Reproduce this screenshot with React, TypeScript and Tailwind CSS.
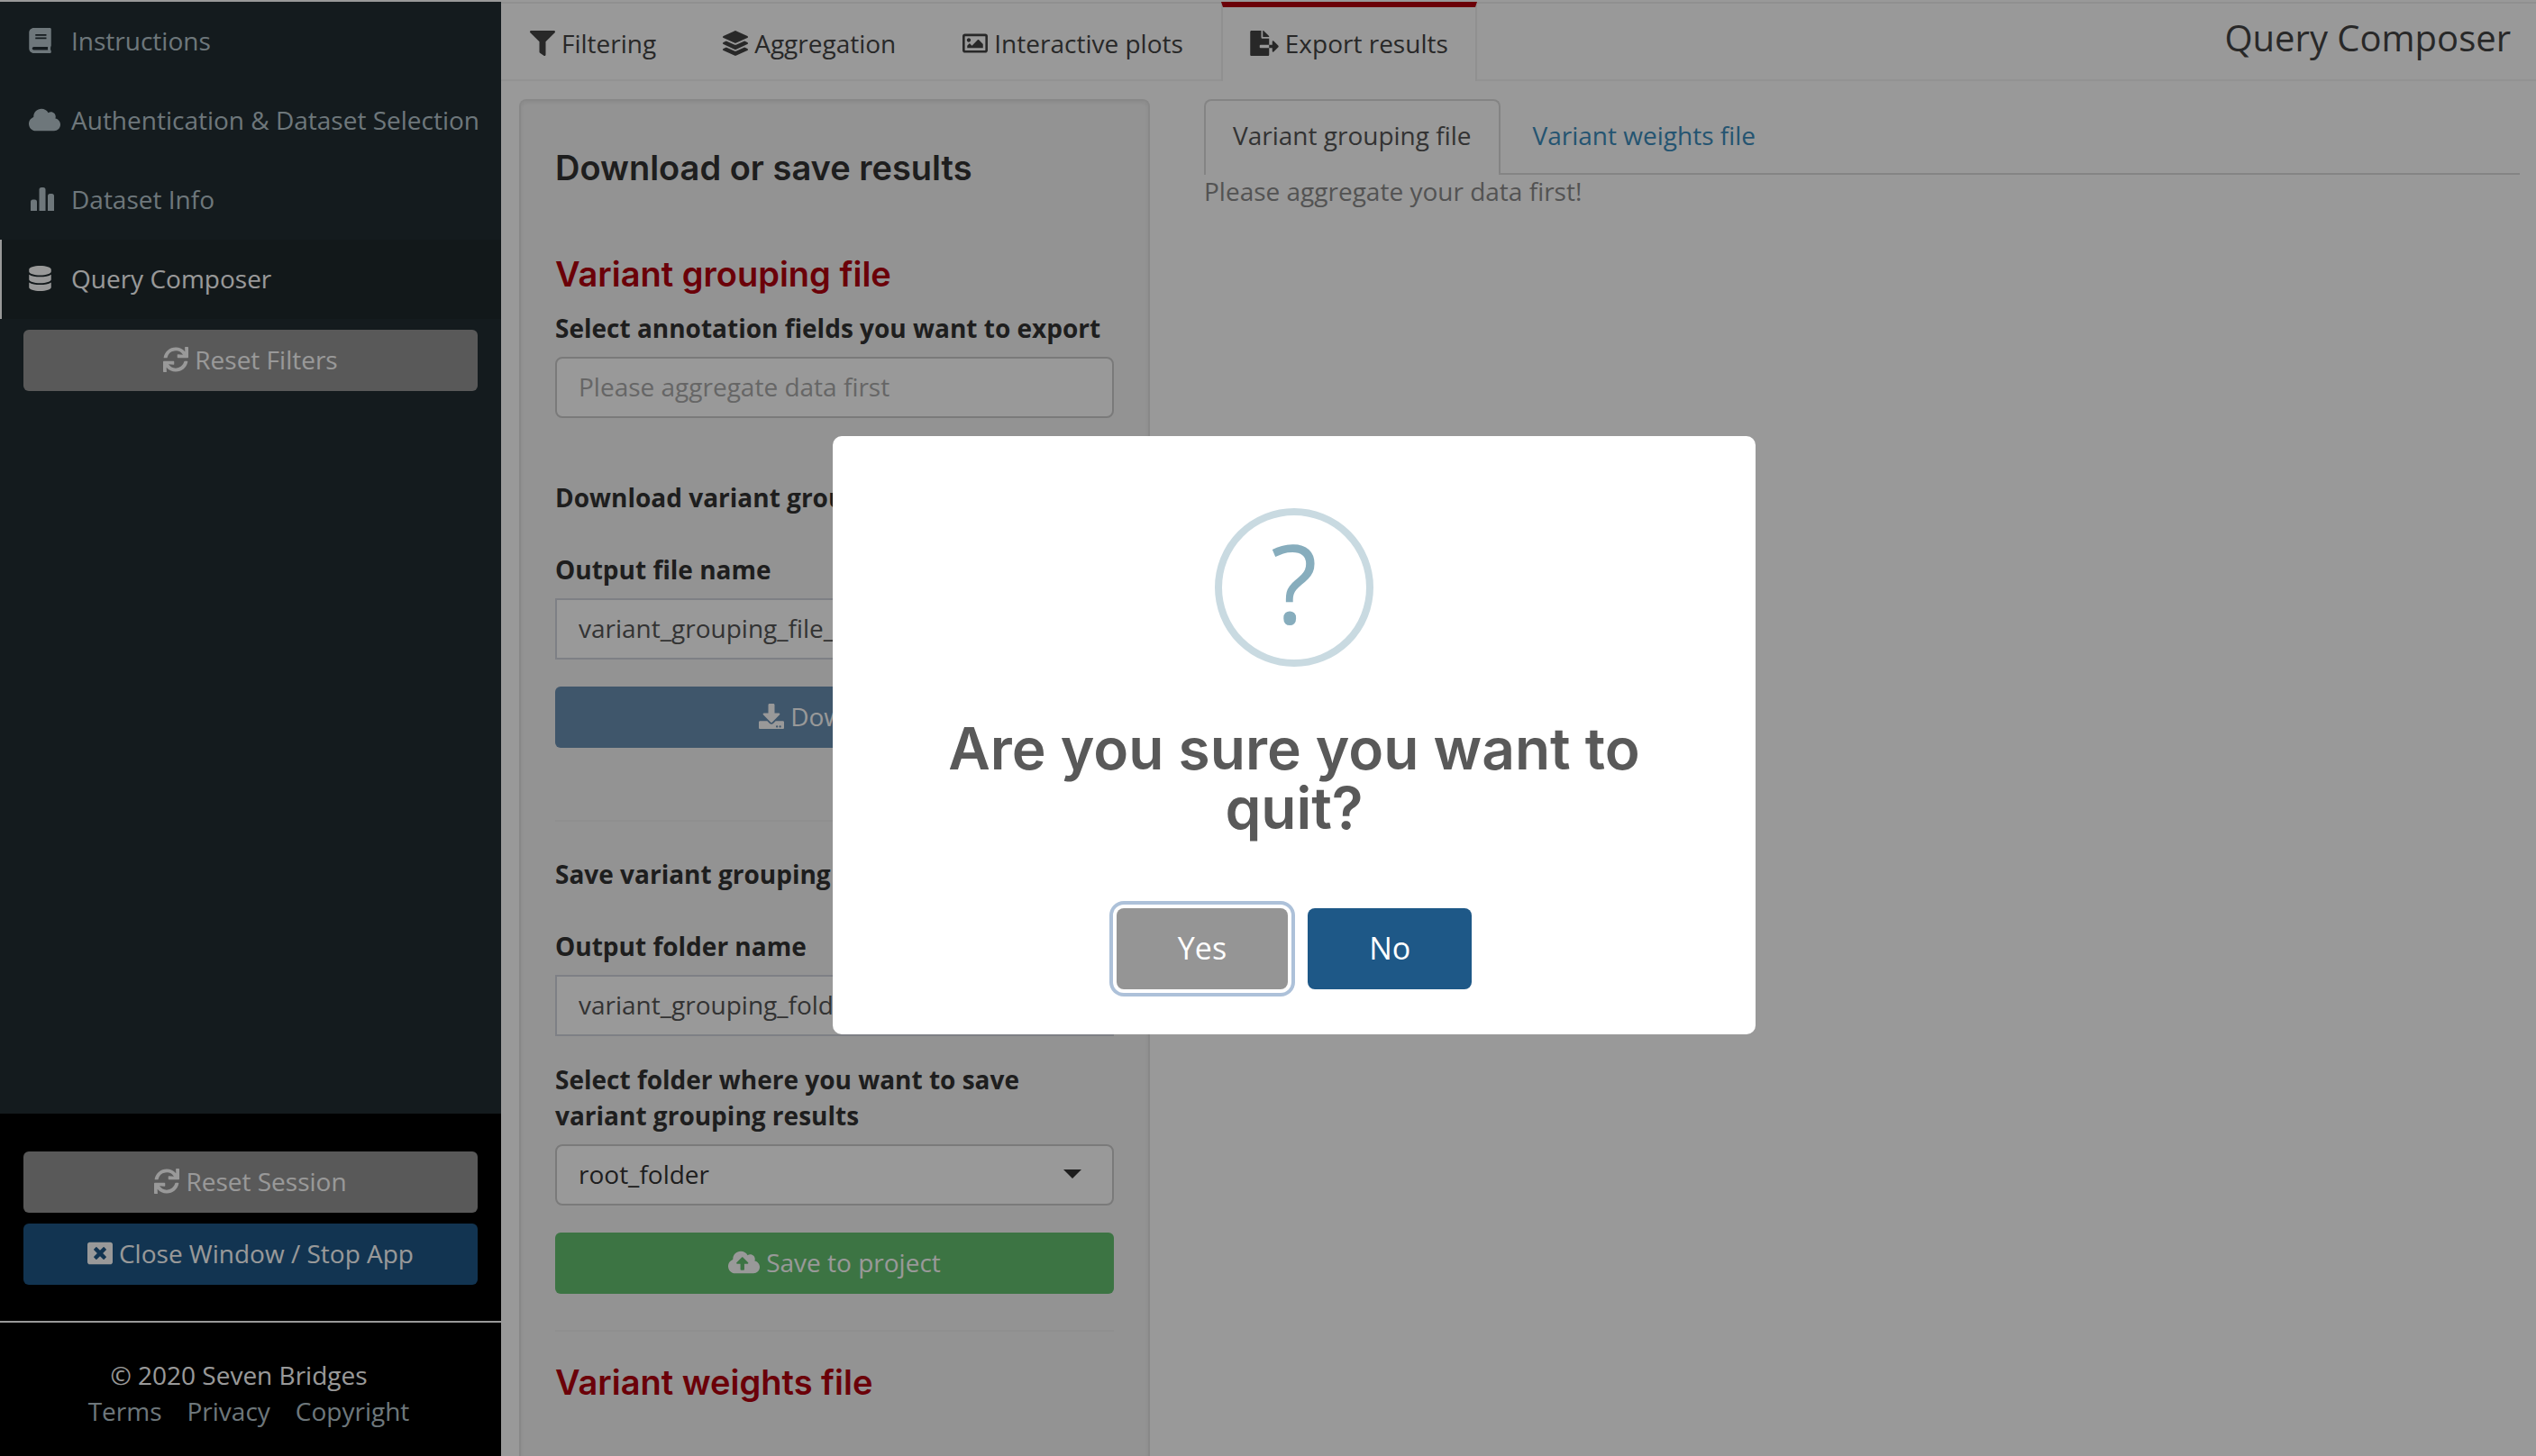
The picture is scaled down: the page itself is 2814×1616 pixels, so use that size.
import React from "react";
import {
  FaBook,
  FaCloud,
  FaCloudUploadAlt,
  FaDatabase,
  FaDownload,
  FaFileExport,
  FaFilter,
  FaLayerGroup,
  FaRegImage,
  FaSync,
  FaWindowClose,
} from "react-icons/fa";

function StatBars() {
  return (
    <svg width="28" height="28" viewBox="0 0 28 28" fill="currentColor" aria-hidden="true">
      <path d="M2 27V17a2.500 2.500 0 0 1 2.500-2.500h2A2.500 2.500 0 0 1 9 17v10z" />
      <path d="M11.500 27V3.500A2.500 2.500 0 0 1 14 1h2a2.500 2.500 0 0 1 2.500 2.500V27z" />
      <path d="M21 27V10.500A2.500 2.500 0 0 1 23.500 8h2a2.500 2.500 0 0 1 2.500 2.500V27z" />
    </svg>
  );
}

const navItems = [
  { label: "Instructions", icon: <FaBook className="h-7 w-[25px]" />, active: false },
  { label: "Authentication & Dataset Selection", icon: <FaCloud className="h-7 w-[35px]" />, active: false },
  { label: "Dataset Info", icon: <StatBars />, active: false },
  { label: "Query Composer", icon: <FaDatabase className="h-7 w-[25px]" />, active: true },
];

const mainTabs = [
  { label: "Filtering", icon: <FaFilter />, active: false },
  { label: "Aggregation", icon: <FaLayerGroup />, active: false },
  { label: "Interactive plots", icon: <FaRegImage />, active: false },
  { label: "Export results", icon: <FaFileExport className="h-7 w-8" />, active: true },
];

function ActionButton({ icon, label, tone }: { icon: React.ReactNode; label: string; tone: string }) {
  return (
    <button type="button" className={`flex h-[68px] w-full items-center justify-center gap-[7px] rounded-md pb-[2px] text-white ${tone}`}>
      {icon}
      <span>{label}</span>
    </button>
  );
}

function Sidebar() {
  return (
    <aside className="flex w-[556px] shrink-0 flex-col bg-[#222d32] text-[#b8c7ce]">
      <nav>
        {navItems.map((item) => (
          <a
            key={item.label}
            href="#"
            className={`flex h-[88px] items-center border-l-2 pb-[2px] pl-[30px] whitespace-nowrap ${
              item.active ? "border-white bg-[#1e282c] text-white" : "border-transparent"
            }`}
          >
            <span className="w-[47px] shrink-0">{item.icon}</span>
            {item.label}
          </a>
        ))}
      </nav>
      <div className="px-[26px] pt-3">
        <ActionButton icon={<FaSync />} label="Reset Filters" tone="bg-[#959595]" />
      </div>
      <footer className="mt-auto bg-black pb-[30px]">
        <div className="flex flex-col gap-3 border-b-2 border-white px-[26px] pt-[42px] pb-10">
          <ActionButton icon={<FaSync />} label="Reset Session" tone="bg-[#959595]" />
          <ActionButton icon={<FaWindowClose />} label="Close Window / Stop App" tone="bg-[#1e5887]" />
        </div>
        <p className="pt-[38px] pr-[26px] text-center text-white">© 2020 Seven Bridges</p>
        <div className="flex justify-center gap-7 pr-1">
          <a href="#">Terms</a>
          <a href="#">Privacy</a>
          <a href="#">Copyright</a>
        </div>
      </footer>
    </aside>
  );
}

function TopTabs() {
  return (
    <header className="flex justify-between border-b-2 border-[#f4f4f4] shadow-[inset_0_2px_0_#f0f0f0]">
      <nav className="-mb-[2px] flex gap-[10px]">
        {mainTabs.map((tab) => (
          <a
            key={tab.label}
            href="#"
            className={`flex items-center gap-[7px] border-x-2 border-t-[6px] px-[30px] pt-5 pb-[22px] ${
              tab.active ? "border-x-[#f0f0f0] border-t-[#b2000e] bg-white" : "border-transparent"
            }`}
          >
            {tab.icon}
            {tab.label}
          </a>
        ))}
      </nav>
      <h1 className="pt-5 pr-7 text-[40px] leading-10">Query Composer</h1>
    </header>
  );
}

const heading = "font-[Inter,sans-serif] text-[38px] leading-10 font-semibold";
const label = "block font-bold text-[#333]";
const field = "mt-3 block h-[68px] w-full border-2 bg-white px-6 pb-[2px] text-[#555] placeholder:text-[#aaa] placeholder:opacity-100";

function ExportPanel() {
  return (
    <section className="col-span-4 rounded-t-lg border-2 border-b-0 border-[#e3e3e3] bg-[#f5f5f5] px-[38px] pt-[38px] text-[#333] shadow-[inset_0_2px_4px_rgba(0,0,0,0.06)]">
      <h2 className={`${heading} mt-4`}>Download or save results</h2>
      <h3 className={`${heading} mt-[78px] text-[#b2000e]`}>Variant grouping file</h3>
      <label htmlFor="fields" className={`${label} mt-5`}>Select annotation fields you want to export</label>
      <input id="fields" placeholder="Please aggregate data first" className={`${field} rounded-lg border-[#ccc]`} />
      <p className={`${label} mt-[68px]`}>Download variant grouping file</p>
      <label htmlFor="file" className={`${label} mt-10`}>Output file name</label>
      <input id="file" defaultValue="variant_grouping_file_name" className={`${field} mb-[30px] border-[#d2d6de]`} />
      <ActionButton icon={<FaDownload />} label="Download" tone="bg-[#698fb2]" />
      <hr className="mt-20 mb-[38px] border-t-2 border-[#eee]" />
      <p className={label}>Save variant grouping file</p>
      <label htmlFor="folder" className={`${label} mt-10`}>Output folder name</label>
      <input id="folder" defaultValue="variant_grouping_folder" className={`${field} border-[#d2d6de]`} />
      <label htmlFor="target" className={`${label} mt-7`}>Select folder where you want to save variant grouping results</label>
      <div className="relative mt-3 mb-[30px]">
        <select id="target" className="block h-[68px] w-full appearance-none rounded-lg border-2 border-[#ccc] bg-white px-6 pb-[2px] text-[#333]">
          <option>root_folder</option>
        </select>
        <svg className="pointer-events-none absolute top-7 right-9" width="20" height="10" viewBox="0 0 20 10" fill="#333" aria-hidden="true">
          <path d="M0 0h20L10 10z" />
        </svg>
      </div>
      <ActionButton icon={<FaCloudUploadAlt className="h-7 w-[35px]" />} label="Save to project" tone="bg-[#65c170]" />
      <hr className="mt-10 mb-9 border-t-2 border-[#eee]" />
      <h3 className={`${heading} text-[#b2000e]`}>Variant weights file</h3>
    </section>
  );
}

function Preview() {
  return (
    <section className="col-span-8">
      <nav className="flex gap-1 border-b-2 border-[#ddd]">
        <a href="#" className="-mb-[2px] rounded-t-lg border-2 border-b-0 border-[#ddd] bg-white px-[30px] pt-[18px] pb-6 text-[#555]">
          Variant grouping file
        </a>
        <a href="#" className="border-2 border-b-0 border-transparent px-[30px] pt-[18px] pb-[22px] text-[#3c8dbc]">Variant weights file</a>
      </nav>
      <p className="-mt-[2px] text-[#8a8a8a]">Please aggregate your data first!</p>
    </section>
  );
}

function QuitDialog() {
  return (
    <div className="fixed inset-0 flex items-center justify-center bg-black/40 pt-4 pl-[58px]">
      <div role="dialog" aria-modal="true" aria-labelledby="quit-title" className="flex w-[1024px] flex-col items-center rounded-[10px] bg-white px-16 pt-20 pb-[50px]">
        <div className="flex size-44 items-center justify-center rounded-full border-8 border-[#c9dae1] pb-3 text-[120px] leading-none text-[#87adbd]">?</div>
        <h2 id="quit-title" className="mt-[58px] text-center font-[Inter,sans-serif] text-[64px] leading-[66px] font-semibold text-[#595959]">
          Are you sure you want to quit?
        </h2>
        <div className="mt-[78px] flex gap-[22px] text-[34px]">
          <button type="button" className="h-[90px] rounded-lg bg-[#959595] px-[68px] pb-[2px] text-white shadow-[0_0_0_4px_#fff,0_0_0_8px_#adc1d9]">Yes</button>
          <button type="button" className="h-[90px] rounded-lg bg-[#1e5887] px-[68px] pb-[2px] text-white">No</button>
        </div>
      </div>
    </div>
  );
}

export default function App() {
  return (
    <div className="flex h-screen overflow-hidden border-t-2 border-white bg-white font-['Open_Sans',sans-serif] text-[28px] leading-10 text-[#444]">
      <Sidebar />
      <main className="flex min-w-0 flex-1 flex-col">
        <TopTabs />
        <div className="grid flex-1 grid-cols-12 gap-x-[60px] pt-5 pr-[18px] pl-5">
          <ExportPanel />
          <Preview />
        </div>
      </main>
      <QuitDialog />
    </div>
  );
}
